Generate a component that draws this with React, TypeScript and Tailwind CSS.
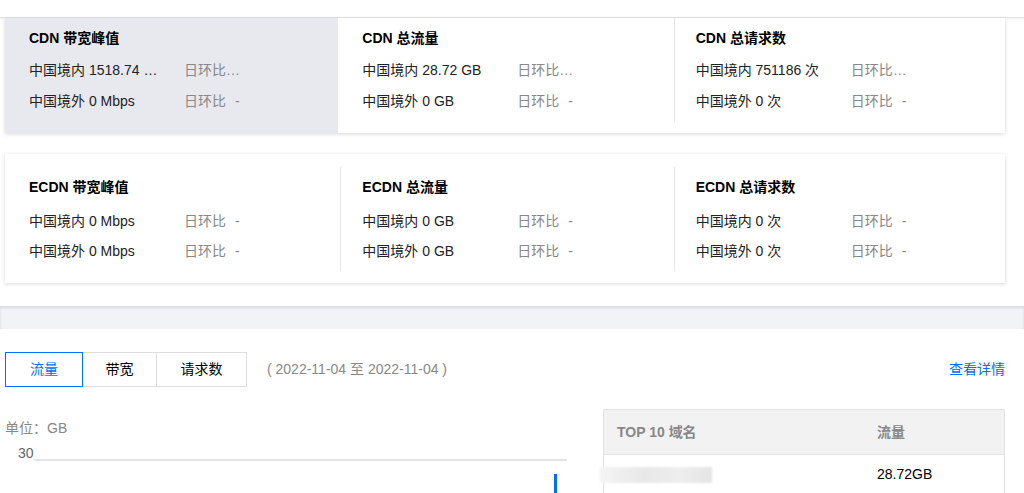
import React from "react";

type StatRow = { label: string; ratio: string };
type StatCell = { title: string; rows: StatRow[] };

const cdnStats: StatCell[] = [
  {
    title: "CDN 带宽峰值",
    rows: [
      { label: "中国境内 1518.74 Mbps", ratio: "↑ 3.25%" },
      { label: "中国境外 0 Mbps", ratio: "-" },
    ],
  },
  {
    title: "CDN 总流量",
    rows: [
      { label: "中国境内 28.72 GB", ratio: "↑ 1.08%" },
      { label: "中国境外 0 GB", ratio: "-" },
    ],
  },
  {
    title: "CDN 总请求数",
    rows: [
      { label: "中国境内 751186 次", ratio: "↓ 0.42%" },
      { label: "中国境外 0 次", ratio: "-" },
    ],
  },
];

const ecdnStats: StatCell[] = [
  {
    title: "ECDN 带宽峰值",
    rows: [
      { label: "中国境内 0 Mbps", ratio: "-" },
      { label: "中国境外 0 Mbps", ratio: "-" },
    ],
  },
  {
    title: "ECDN 总流量",
    rows: [
      { label: "中国境内 0 GB", ratio: "-" },
      { label: "中国境外 0 GB", ratio: "-" },
    ],
  },
  {
    title: "ECDN 总请求数",
    rows: [
      { label: "中国境内 0 次", ratio: "-" },
      { label: "中国境外 0 次", ratio: "-" },
    ],
  },
];

function StatCard({
  stats,
  first,
  hovered,
}: {
  stats: StatCell[];
  first?: boolean;
  hovered?: number;
}) {
  return (
    <div className="flex w-[1000px] bg-white shadow-[0_1px_4px_rgba(0,0,0,0.16)]">
      {stats.map((s, i) => (
        <div
          key={s.title}
          className={`flex-1 ${first ? "pb-[11px]" : "pt-[13px] pb-[12px]"} ${
            hovered === i ? "bg-[#e7e9ee]" : ""
          }`}
        >
          <div
            className={`ml-[2px] border-l pl-[21px] pt-[10px] ${first ? "pb-[11px]" : "pb-[10px]"} ${
              i === 0 || hovered === i || hovered === i - 1
                ? "border-transparent"
                : "border-[#e6e6e6]"
            }`}
          >
            <div className="text-[14px] font-bold leading-5 text-black">
              {s.title}
            </div>
            {s.rows.map((r, j) => (
              <div
                key={r.label}
                className={`flex text-[14px] leading-5 ${
                  j === 0 ? (first ? "mt-3" : "mt-[14px]") : first ? "mt-[11px]" : "mt-[10px]"
                }`}
              >
                <span className="w-[135px] truncate text-[#222]">{r.label}</span>
                <span className="ml-[20px] w-[60px] truncate text-[#888]">
                  日环比<span className="ml-[9px]">{r.ratio}</span>
                </span>
              </div>
            ))}
          </div>
        </div>
      ))}
    </div>
  );
}

const tabs = [
  { label: "流量", w: "w-[78px]" },
  { label: "带宽", w: "w-[74px]" },
  { label: "请求数", w: "w-[90px]" },
];

export default function App() {
  return (
    <div className="h-[493px] w-[1024px] overflow-hidden bg-white font-['Liberation_Sans','Noto_Sans_CJK_SC',sans-serif]">
      <div className="h-[18px] border-b border-[#e3e3e3] shadow-[0_1px_2px_rgba(0,0,0,0.06)]" />

      <div className="pl-[5px]">
        <StatCard stats={cdnStats} first hovered={0} />
        <div className="mt-[21px]">
          <StatCard stats={ecdnStats} />
        </div>
      </div>

      <div className="mt-[23px] h-[23px] bg-[#f2f3f6] shadow-[inset_0_2px_3px_rgba(0,0,0,0.1)]" />

      <div className="w-[1005px] pl-[5px] pt-[23px]">
        <div className="flex items-center">
          <div className="flex">
            {tabs.map((t, i) => (
              <button
                key={t.label}
                className={`h-[35px] ${t.w} text-center text-[14px] ${
                  i === 0
                    ? "border border-[#006eff] text-[#006eff]"
                    : "border-y border-r border-[#dddddd] text-black"
                }`}
              >
                {t.label}
              </button>
            ))}
          </div>
          <span className="ml-[20px] text-[14px] text-[#888]">
            ( 2022-11-04 至 2022-11-04 )
          </span>
          <a className="ml-auto text-[14px] text-[#006eff]">查看详情</a>
        </div>

        <div className="mt-[22px] flex gap-[36px]">
          <div className="flex-1">
            <div className="pt-[9px] text-[14px] leading-5 text-[#888]">单位：GB</div>
            <svg className="mt-[3px] block" width="562" height="60">
              <text x="13" y="17" fontSize="14" fill="#666" fontFamily="Liberation Sans, sans-serif">
                30
              </text>
              <line x1="29" y1="19" x2="562" y2="19" stroke="#e3e3e3" strokeWidth="2" />
              <rect x="549" y="33" width="3" height="30" fill="#006eff" />
            </svg>
          </div>

          <div className="w-[402px] border border-[#e2e2e2]">
            <div className="flex h-[45px] items-center border-b border-[#e2e2e2] bg-[#f2f2f2] text-[14px] font-bold text-[#888]">
              <div className="w-[259px] pl-[13px]">TOP 10 域名</div>
              <div className="pl-[14px]">流量</div>
            </div>
            <div className="flex h-[39px] items-center text-[14px]">
              <div className="w-[259px] pl-[13px]">
                <div className="-ml-[17px] h-[16px] w-[112px] bg-[linear-gradient(90deg,#f4f4f4,#e8e8e8_40%,#eeeeee_70%,#e4e4e4)] blur-[1px]" />
              </div>
              <div className="pl-[14px] text-black">28.72GB</div>
            </div>
          </div>
        </div>
      </div>
    </div>
  );
}
